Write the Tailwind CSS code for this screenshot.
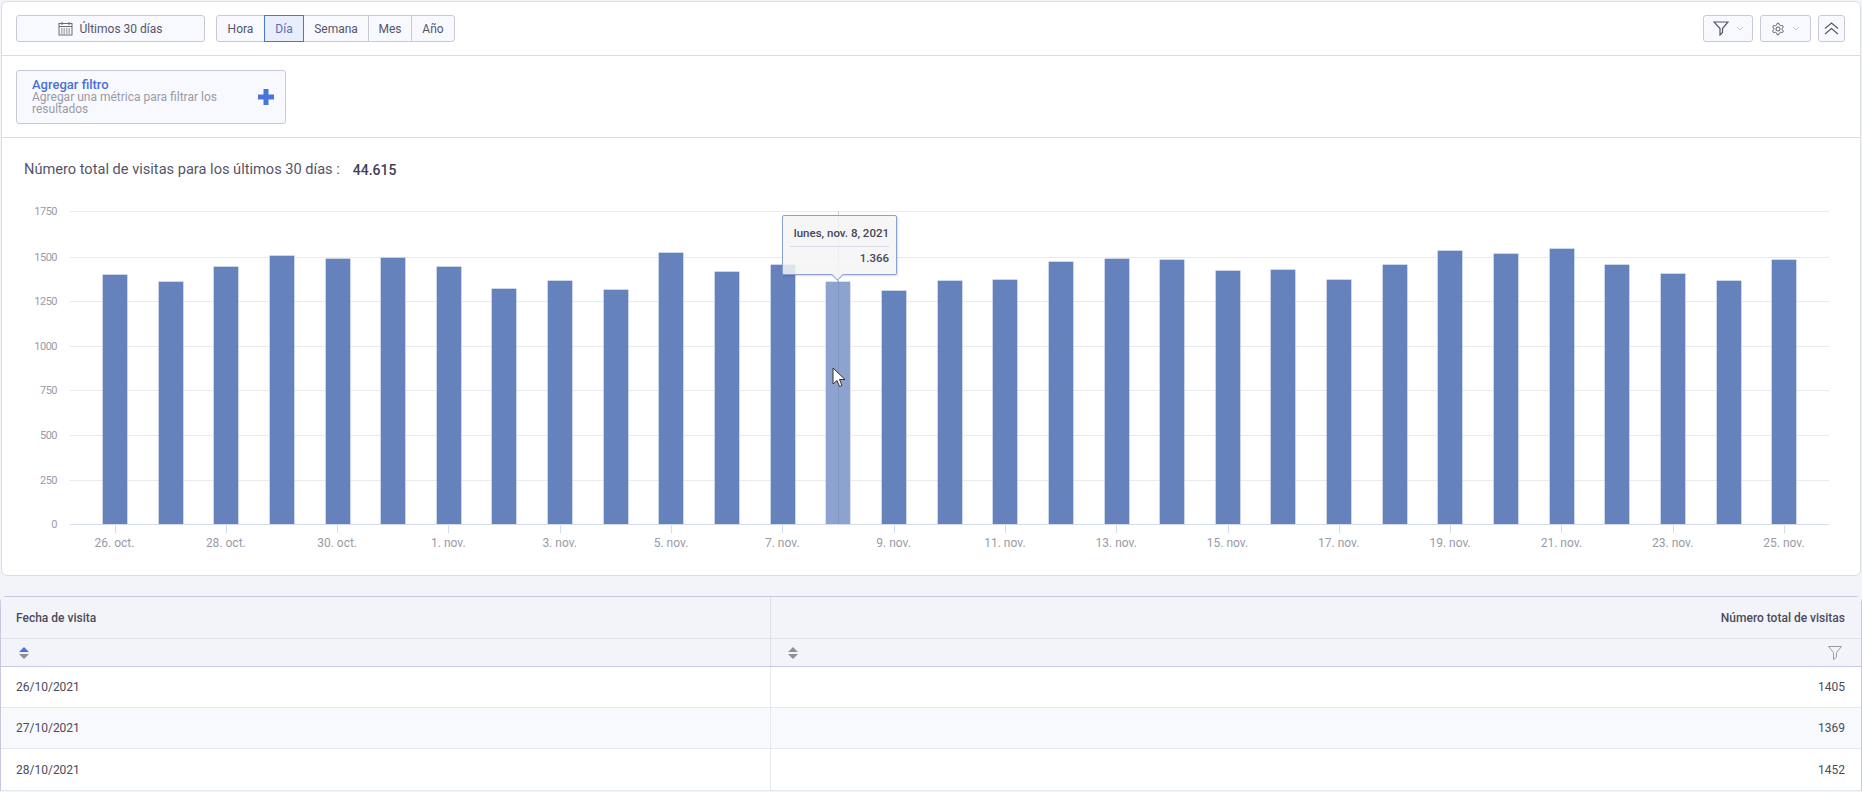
<!DOCTYPE html>
<html lang="es">
<head>
  <meta charset="UTF-8" />
  <title>Visitas</title>
  <script src="https://cdn.jsdelivr.net/npm/@tailwindcss/browser@4"></script>
</head>
<body class="h-[792px] overflow-hidden bg-[#f3f4f9] font-['Roboto',sans-serif] text-[13px] text-[#4b4b5c]">

  <!-- panel superior -->
  <div class="mx-px mt-px h-[575px] rounded-md border border-[#dcdce8] bg-white">

    <div class="flex h-[54px] items-start border-b border-[#dcdce8] pl-[14px] pr-[15px] pt-[13px]">
      <button class="flex h-[27px] w-[189px] items-center justify-center gap-[6px] rounded-[3px] border border-[#c9c9da] bg-[#f8f9fe] text-xs text-[#55556a]">
        <svg width="15" height="15" viewBox="0 0 15 15" fill="none" stroke="#6b6b78">
          <rect x="1" y="2.500" width="13" height="11.500" />
          <path d="M1 5.500h13M4 1v3M11 1v3" />
          <path d="M3 8h9M3 10h9M3 12h9" stroke-dasharray="1.500 1" />
        </svg>
        <span>Últimos 30 días</span>
      </button>

      <div class="ml-[11px] flex h-[27px] rounded-[3px] border border-[#c9c9da] bg-[#f8f9fe] text-xs text-[#55556a]">
        <span class="flex w-[47px] items-center justify-center">Hora</span>
        <span class="-my-px flex w-10 items-center justify-center border border-[#4a74d9] bg-[#e8eefb] text-[#5b6fb0]">Día</span>
        <span class="flex w-[65px] items-center justify-center border-r border-[#c9c9da]">Semana</span>
        <span class="flex w-[43px] items-center justify-center border-r border-[#c9c9da]">Mes</span>
        <span class="flex w-[42px] items-center justify-center">Año</span>
      </div>

      <div class="ml-auto flex gap-[7px]">
        <button class="flex h-[27px] w-[50px] items-center justify-center gap-[7px] rounded-[3px] border border-[#c9c9da] bg-[#f8f9fe]">
          <svg width="16" height="15" viewBox="0 0 16 15" fill="none" stroke="#55556a" stroke-width="1.200">
            <path d="M1 1h14l-5.500 6.500v4L7 14V7.500z" />
          </svg>
          <svg width="8" height="5" viewBox="0 0 8 5" fill="none" stroke="#c4c4d2"><path d="M1 1l3 3 3-3" /></svg>
        </button>
        <button class="flex h-[27px] w-[51px] items-center justify-center gap-[7px] rounded-[3px] border border-[#c9c9da] bg-[#f8f9fe]">
          <svg width="14" height="14" viewBox="0 0 24 24" fill="none" stroke="#55556a" stroke-width="1.700">
            <path d="M12.220 2h-.44a2 2 0 0 0-2 2v.18a2 2 0 0 1-1 1.730l-.43.25a2 2 0 0 1-2 0l-.15-.08a2 2 0 0 0-2.730.73l-.22.38a2 2 0 0 0 .73 2.730l.15.1a2 2 0 0 1 1 1.720v.51a2 2 0 0 1-1 1.740l-.15.09a2 2 0 0 0-.73 2.730l.22.38a2 2 0 0 0 2.730.73l.15-.08a2 2 0 0 1 2 0l.43.25a2 2 0 0 1 1 1.730V20a2 2 0 0 0 2 2h.44a2 2 0 0 0 2-2v-.18a2 2 0 0 1 1-1.730l.43-.25a2 2 0 0 1 2 0l.15.08a2 2 0 0 0 2.730-.73l.22-.39a2 2 0 0 0-.73-2.730l-.15-.08a2 2 0 0 1-1-1.740v-.5a2 2 0 0 1 1-1.740l.15-.09a2 2 0 0 0 .73-2.730l-.22-.38a2 2 0 0 0-2.730-.73l-.15.08a2 2 0 0 1-2 0l-.43-.25a2 2 0 0 1-1-1.730V4a2 2 0 0 0-2-2z" />
            <circle cx="12" cy="12" r="3.500" />
          </svg>
          <svg width="8" height="5" viewBox="0 0 8 5" fill="none" stroke="#c4c4d2"><path d="M1 1l3 3 3-3" /></svg>
        </button>
        <button class="flex h-[27px] w-[27px] items-center justify-center rounded-[3px] border border-[#c9c9da] bg-[#f8f9fe]">
          <svg width="15" height="13" viewBox="0 0 15 13" fill="none" stroke="#55556a" stroke-width="1.100">
            <path d="M1 6.500l6.500-5.500 6.500 5.500M1 12l6.500-5.500 6.500 5.500" />
          </svg>
        </button>
      </div>
    </div>

    <div class="h-[82px] border-b border-[#dcdce8] pl-[14px] pt-[14px]">
      <button class="flex h-[54px] w-[270px] items-center justify-between rounded-[3px] border border-[#c9c9da] bg-[#f8f9fe] pl-[15px] pr-[11px] text-left">
        <span class="block w-[205px]">
          <span class="block text-[13px] leading-[12px] font-medium text-[#4a6fd8]">Agregar filtro</span>
          <span class="block text-xs leading-[12px] text-[#9a9aa6]">Agregar una métrica para filtrar los resultados</span>
        </span>
        <svg width="16" height="16" viewBox="0 0 16 16" fill="#4a74d9"><path d="M5.500 0h5v5.500H16v5h-5.500V16h-5v-5.500H0v-5h5.500z" /></svg>
      </button>
    </div>

    <div class="flex h-[60px] items-center gap-[13px] pl-[22px] pt-1 text-[14.6px] text-[#55556a]">
      <span>Número total de visitas para los últimos 30 días :</span>
      <span class="text-sm font-medium text-[#3f3f50]">44.615</span>
    </div>

    <div class="relative h-[376px] w-full">
      <svg id="chart" width="1858" height="376" viewBox="0 198 1858 376" class="block"></svg>

      <div class="absolute left-[780px] top-[17px] h-[60px] w-[115px] rounded-[2px] border border-[#8ba0d2] bg-[#f4f4f4]/85 px-[7px] pt-[9px] text-right text-[11.5px] leading-4 font-medium whitespace-nowrap text-[#45455a] shadow-[1px_1px_2px_rgba(0,0,0,0.15)]">
        <div class="border-b border-[#d9d9e6] pb-[5px]">lunes, nov. 8, 2021</div>
        <div class="pt-[3px]">1.366</div>
        <div class="absolute left-[50px] top-[54px] size-[9px] rotate-45 border-b border-r border-[#8ba0d2] bg-[#f4f4f4]"></div>
      </div>

      <svg class="absolute left-[830px] top-[169px]" width="14" height="22" viewBox="0 0 14 22">
        <path d="M1 1v16l4-3.500 2.500 6 2.500-1-2.500-6H13z" fill="#fff" stroke="#333" />
      </svg>
    </div>
  </div>

  <!-- tabla -->
  <div class="mt-5 rounded-t-md border-x border-t border-[#c9c7dd] bg-white">
    <div class="flex h-[42px] items-center border-b border-[#e2e2ec] bg-[#f3f4f9] text-xs font-medium">
      <div class="flex h-full w-[770px] items-center border-r border-[#e0e0ea] pl-[15px]">Fecha de visita</div>
      <div class="flex-1 pr-4 text-right">Número total de visitas</div>
    </div>
    <div class="flex h-7 items-center border-b border-[#c9c7dd] bg-[#f3f4f9]">
      <div class="flex h-full w-[770px] items-center border-r border-[#e0e0ea] pl-[18px]">
        <svg width="10" height="12" viewBox="0 0 10 12"><path d="M5 0l5 5H0z" fill="#4a74d9" /><path d="M5 12L0 7h10z" fill="#8e8e9c" /></svg>
      </div>
      <div class="flex h-full flex-1 items-center justify-between pl-[17px] pr-[19px]">
        <svg width="10" height="12" viewBox="0 0 10 12" fill="#8e8e9c"><path d="M5 0l5 5H0zM5 12L0 7h10z" /></svg>
        <svg width="14" height="14" viewBox="0 0 14 14" fill="none" stroke="#9a9aa6"><path d="M.5.500h13l-5 6v4.500l-3 2.500V6.500z" /></svg>
      </div>
    </div>
    <div class="flex h-[41px] items-center border-b border-[#e6e6ef] bg-white text-xs">
      <div class="flex h-full w-[770px] items-center border-r border-[#e8e8f0] pl-[15px]">26/10/2021</div>
      <div class="flex-1 pr-4 text-right">1405</div>
    </div>
    <div class="flex h-[41px] items-center border-b border-[#e6e6ef] bg-[#f8f9fd] text-xs">
      <div class="flex h-full w-[770px] items-center border-r border-[#e8e8f0] pl-[15px]">27/10/2021</div>
      <div class="flex-1 pr-4 text-right">1369</div>
    </div>
    <div class="flex h-[42px] items-center border-b border-[#e6e6ef] bg-white text-xs">
      <div class="flex h-full w-[770px] items-center border-r border-[#e8e8f0] pl-[15px]">28/10/2021</div>
      <div class="flex-1 pr-4 text-right">1452</div>
    </div>
  </div>

  <script>
    const svg = document.getElementById('chart');
    const NS = 'http://www.w3.org/2000/svg';
    // y de la parte alta de cada barra, en px
    const tops = [274, 281, 266, 255, 258, 257, 266, 288, 280, 289, 252, 271, 264, 281, 290, 280, 279, 261, 258, 259, 270, 269, 279, 264, 250, 253, 248, 264, 273, 280, 259];
    const grid = [211, 257, 301, 346, 390, 435, 480, 524];
    const labels = ['26. oct.', '28. oct.', '30. oct.', '1. nov.', '3. nov.', '5. nov.', '7. nov.', '9. nov.', '11. nov.', '13. nov.', '15. nov.', '17. nov.', '19. nov.', '21. nov.', '23. nov.', '25. nov.'];

    function add(tag, attrs, text) {
      const el = document.createElementNS(NS, tag);
      for (const k in attrs) el.setAttribute(k, attrs[k]);
      if (text) el.textContent = text;
      svg.appendChild(el);
    }

    // las coordenadas son de la página; el svg empieza en x=2
    ['1750', '1500', '1250', '1000', '750', '500', '250', '0'].forEach((t, i) => {
      const y = grid[i];
      if (i < 7) add('rect', { x: 68, y: y, width: 1759, height: 1, fill: '#e9e9ef' });
      add('text', { x: 55, y: y + 4, 'text-anchor': 'end', class: 'fill-[#9a9aa6] text-[11px] tracking-[-0.5px]' }, t);
    });

    add('rect', { x: 836, y: 211, width: 1, height: 313, fill: '#cfcfdb' });

    tops.forEach((top, i) => {
      const x = Math.round(100 + i * 55.64);
      add('rect', { x: x + 0.5, y: top + 0.5, width: 25, height: 524 - top, fill: i === 13 ? '#8ea2cf' : '#6582bc', stroke: '#fff', 'stroke-opacity': 0.35 });
    });

    add('rect', { x: 836, y: 281, width: 1, height: 243, fill: '#7f95c6' });
    add('rect', { x: 68, y: 524, width: 1759, height: 1, fill: '#d5dcef' });

    labels.forEach((t, i) => {
      const x = 112.5 + i * 111.3;
      add('rect', { x: Math.round(x), y: 525, width: 1, height: 8, fill: '#d5dcef' });
      add('text', { x: x, y: 547, 'text-anchor': 'middle', class: 'fill-[#9a9aa6] text-xs' }, t);
    });
  </script>
</body>
</html>
